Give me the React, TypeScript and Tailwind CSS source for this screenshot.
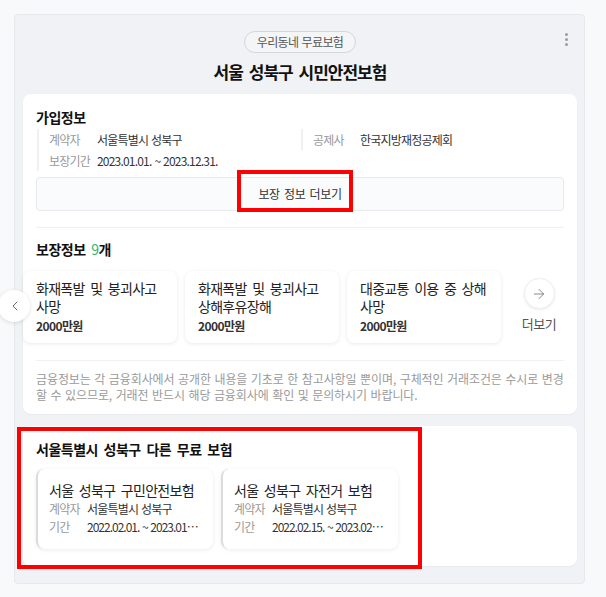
import { ChevronLeft, ArrowRight } from 'lucide-react';

const coverages = [
    { title: ['화재폭발 및 붕괴사고', '사망'], amount: '2000만원' },
    { title: ['화재폭발 및 붕괴사고', '상해후유장해'], amount: '2000만원' },
    { title: ['대중교통 이용 중 상해', '사망'], amount: '2000만원' },
];

const others = [
    { name: '서울 성북구 구민안전보험', owner: '서울특별시 성북구', period: '2022.02.01. ~ 2023.01.31.' },
    { name: '서울 성북구 자전거 보험', owner: '서울특별시 성북구', period: '2022.02.15. ~ 2023.02.14.' },
];

export default function App() {
    return (
        <div className="relative w-[606px] h-[597px] overflow-hidden bg-[#f8f9fa] pt-[14px] pl-[14px] font-['Noto_Sans_CJK_KR',sans-serif] text-[#222]">
            <div className="relative w-[571px] h-[570px] rounded-[4px] border border-[#e6e8eb] bg-[#f1f2f5] pt-[16px] pl-[8px] pr-[7px]">
                {/* kebab */}
                <div className="absolute top-[18px] right-[16px] flex flex-col gap-[2px]">
                    <span className="w-[3px] h-[3px] rounded-full bg-[#9a9da3]" />
                    <span className="w-[3px] h-[3px] rounded-full bg-[#9a9da3]" />
                    <span className="w-[3px] h-[3px] rounded-full bg-[#9a9da3]" />
                </div>

                <div className="mx-auto w-fit h-[22px] px-[12px] flex items-center rounded-full border border-[#d4d6da] bg-[#f4f5f7] text-[12px] tracking-[-0.6px] [word-spacing:1px] text-[#555]">
                    우리동네 무료보험
                </div>
                <h1 className="mt-[8px] text-center text-[17px] leading-[22px] font-bold tracking-[-1px] [word-spacing:3px] text-[#111]">
                    서울 성북구 시민안전보험
                </h1>

                {/* 가입정보 */}
                <div className="mt-[11px] h-[320px] rounded-[8px] bg-white px-[13px] pt-[12px] shadow-[0_1px_2px_rgba(0,0,0,0.04)]">
                    <h2 className="text-[14px] leading-[22px] font-bold tracking-[-0.5px] [word-spacing:3px] text-[#111]">가입정보</h2>
                    <div className="mt-[1px] flex text-[12px] leading-[21px] tracking-[-0.8px] [word-spacing:1px]">
                        <div className="ml-[1px] w-[264px] border-l-2 border-[#f0f0f2] pl-[10px]">
                            <div className="flex">
                                <span className="w-[48px] text-[#999]">계약자</span>
                                <span className="text-[#333]">서울특별시 성북구</span>
                            </div>
                            <div className="flex">
                                <span className="w-[48px] text-[#999]">보장기간</span>
                                <span className="text-[#333]">2023.01.01. ~ 2023.12.31.</span>
                            </div>
                        </div>
                        <div className="self-start border-l-2 border-[#f0f0f2] pl-[10px] flex">
                            <span className="w-[47px] text-[#999]">공제사</span>
                            <span className="text-[#333]">한국지방재정공제회</span>
                        </div>
                    </div>

                    <div className="mt-[6px] h-[34px] flex items-center justify-center rounded-[4px] border border-[#e8e9ec] bg-[#fafbfc] text-[12px] tracking-[-0.4px] [word-spacing:2px] text-[#333]">
                        보장 정보 더보기
                    </div>

                    <div className="mt-[16px] h-px bg-[#f0f1f3]" />

                    <h2 className="mt-[10px] text-[14px] leading-[22px] font-bold tracking-[-0.5px] [word-spacing:3px] text-[#111]">
                        보장정보 <span className="text-[#2bb673] font-normal">9</span>개
                    </h2>

                    <div className="relative mt-[11px] -mx-[13px] flex">
                        <div className="flex gap-[8px]">
                            {coverages.map((c, i) => (
                                <div key={i} className="w-[154px] h-[72px] rounded-[8px] bg-white px-[13px] pt-[8px] shadow-[0_1px_4px_rgba(0,0,0,0.09)]">
                                    <div className="text-[14px] leading-[18px] tracking-[-0.7px] [word-spacing:3px] text-[#222]">
                                        <div>{c.title[0]}</div>
                                        <div>{c.title[1]}</div>
                                    </div>
                                    <div className="mt-[3px] text-[12px] leading-[16px] font-bold tracking-[-0.6px] text-[#333]">{c.amount}</div>
                                </div>
                            ))}
                        </div>
                        <div className="flex-1 flex flex-col items-center pt-[7px]">
                            <div className="w-[31px] h-[31px] rounded-full bg-white border border-[#eeeff1] shadow-[0_1px_3px_rgba(0,0,0,0.08)] flex items-center justify-center">
                                <ArrowRight className="w-[16px] h-[16px] text-[#777]" strokeWidth={1.3} />
                            </div>
                            <span className="mt-[6px] text-[13px] leading-[18px] tracking-[-0.4px] text-[#555]">더보기</span>
                        </div>
                        <div className="absolute left-[-25px] top-[19px] w-[32px] h-[32px] rounded-full bg-white shadow-[0_1px_4px_rgba(0,0,0,0.12)] flex items-center justify-center">
                            <ChevronLeft className="w-[16px] h-[16px] text-[#666] ml-[2px]" strokeWidth={1.5} />
                        </div>
                    </div>

                    <div className="mt-[17px] h-px bg-[#f0f1f3]" />

                    <p className="mt-[10px] text-[12px] leading-[16px] tracking-[-0.1px] [word-spacing:1px] text-[#9a9a9a] whitespace-nowrap">
                        금융정보는 각 금융회사에서 공개한 내용을 기초로 한 참고사항일 뿐이며, 구체적인 거래조건은 수시로 변경
                        <br />
                        할 수 있으므로, 거래전 반드시 해당 금융회사에 확인 및 문의하시기 바랍니다.
                    </p>
                </div>

                {/* 다른 무료 보험 */}
                <div className="mt-[12px] h-[140px] rounded-[8px] bg-white px-[13px] pt-[12px] shadow-[0_1px_2px_rgba(0,0,0,0.04)]">
                    <h2 className="text-[14px] leading-[22px] font-bold tracking-[-0.5px] [word-spacing:3px] text-[#111]">서울특별시 성북구 다른 무료 보험</h2>
                    <div className="mt-[9px] flex gap-[8px]">
                        {others.map((o, i) => (
                            <div key={i} className="w-[177px] h-[80px] rounded-[8px] bg-white border-l-2 border-[#dcdcdc] pl-[11px] pr-[13px] pt-[11px] shadow-[0_1px_4px_rgba(0,0,0,0.08)]">
                                <div className="text-[14px] leading-[20px] tracking-[-0.7px] [word-spacing:3px] text-[#222] truncate">{o.name}</div>
                                <div className="flex text-[12px] leading-[18px] tracking-[-0.8px] [word-spacing:1px]">
                                    <span className="w-[38px] shrink-0 text-[#999]">계약자</span>
                                    <span className="text-[#333] truncate">{o.owner}</span>
                                </div>
                                <div className="flex text-[12px] leading-[18px] tracking-[-0.8px] [word-spacing:1px]">
                                    <span className="w-[38px] shrink-0 text-[#999]">기간</span>
                                    <span className="text-[#333] tracking-[-1px] truncate">{o.period}</span>
                                </div>
                            </div>
                        ))}
                    </div>
                </div>
            </div>

            {/* annotation boxes */}
            <div className="absolute left-[237px] top-[170px] w-[116px] h-[42px] border-[4px] border-[#ff0000]" />
            <div className="absolute left-[17px] top-[427px] w-[405px] h-[142px] border-[4px] border-[#ff0000]" />
        </div>
    );
}
